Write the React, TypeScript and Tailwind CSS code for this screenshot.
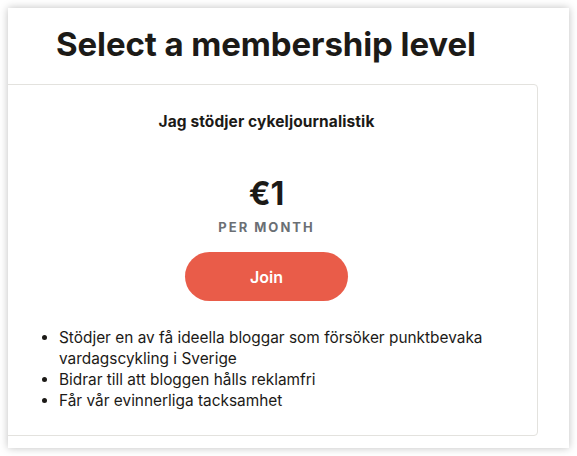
export default function App() {
  const perks = [
    "Stödjer en av få ideella bloggar som försöker punktbevaka vardagscykling i Sverige",
    "Bidrar till att bloggen hålls reklamfri",
    "Får vår evinnerliga tacksamhet",
  ];

  return (
    <div className="min-h-[456px] w-[577px] bg-white p-2 font-['Inter',sans-serif]">
      <div className="h-[440px] w-[561px] overflow-hidden bg-white shadow-[0_0_8px_rgba(0,0,0,0.25)]">
        <h1 className="pl-[48px] pt-[16px] text-[33px] font-bold leading-[40px] tracking-[-0.1px] text-[#1c1a17]">
          Select a membership level
        </h1>

        <div className="ml-[-13px] mt-[20px] h-[352px] w-[543px] rounded-[4px] border border-[#e3e2de]">
          <div className="flex flex-col items-center pt-[27px]">
            <h2 className="text-[15.5px] font-bold leading-[20px] tracking-[0.1px] text-[#1c1a17]">
              Jag stödjer cykeljournalistik
            </h2>
            <div className="mt-[44px] text-[32px] font-bold leading-[36px] text-[#1c1a17]">€1</div>
            <div className="mt-[7px] text-[13px] font-bold leading-[16px] tracking-[2px] text-[#6b6f74]">
              PER MONTH
            </div>
            <button className="mt-[17px] h-[49px] w-[163px] rounded-full bg-[#e95c49] text-[16px] font-semibold text-white">
              Join
            </button>
          </div>

          <ul className="mt-[26px] list-disc pl-[63px] pr-[40px] text-[15.4px] leading-[21px] text-[#1c1a17]">
            {perks.map((p) => (
              <li key={p}>{p}</li>
            ))}
          </ul>
        </div>
      </div>
    </div>
  );
}
